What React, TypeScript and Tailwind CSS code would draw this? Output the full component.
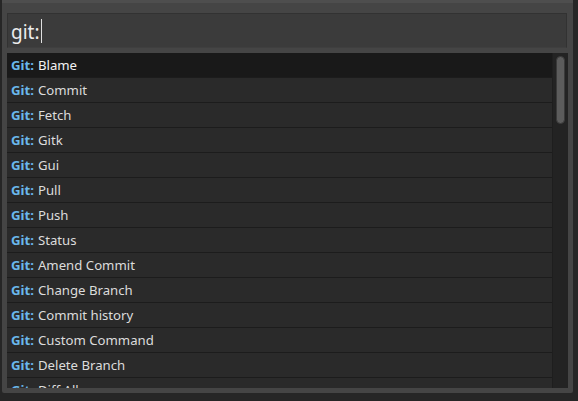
import React from "react";

const items = [
  "Blame",
  "Commit",
  "Fetch",
  "Gitk",
  "Gui",
  "Pull",
  "Push",
  "Status",
  "Amend Commit",
  "Change Branch",
  "Commit history",
  "Custom Command",
  "Delete Branch",
  "Diff All",
];

export default function App() {
  return (
    <div
      className="w-[578px] h-[401px] bg-[#262626] overflow-hidden"
      style={{ fontFamily: '"Noto Sans", "Open Sans", sans-serif' }}
    >
      <div className="ml-[2px] w-[571px] h-[393px] bg-[#454545] border-t-[3px] border-[#4e4e4e] rounded-b-[2px] pl-[5px] pr-[5px] pt-[10px] flex flex-col">
        <div className="h-[35px] w-[560px] bg-[#3b3b3b] border border-[#323232] border-b-[#3f3f3f] flex items-center pl-[3px] pt-[3px]">
          <span className="text-[19px] text-[#ececec] leading-none">git:</span>
          <span className="w-px h-[24px] bg-[#e0e0e0] ml-[1px] -mt-[3px]" />
        </div>
        <div className="mt-[5px] h-[335px] w-[561px] flex bg-[#2a2a2a] overflow-hidden">
          <div className="flex-1 flex flex-col">
            {items.map((t, i) => (
              <div
                key={t}
                className={
                  "h-[25px] shrink-0 flex items-center pl-[4px] pt-[2px] text-[13.2px] border-b border-[#1c1c1c] " +
                  (i === 0 ? "bg-[#191919] text-[#f2f2f2]" : "bg-[#2a2a2a] text-[#dcdcdc]")
                }
              >
                <span className="font-bold text-[#6ab8ec]">Git:</span>
                <span className="ml-[4px]">{t}</span>
              </div>
            ))}
          </div>
          <div className="w-[16px] bg-[#232323] border-l border-[#1e1e1e] pt-[3px] flex justify-center">
            <div className="w-[9px] h-[68px] rounded-full bg-[#5c5c5c] border border-[#3a3a3a]" />
          </div>
        </div>
      </div>
    </div>
  );
}
